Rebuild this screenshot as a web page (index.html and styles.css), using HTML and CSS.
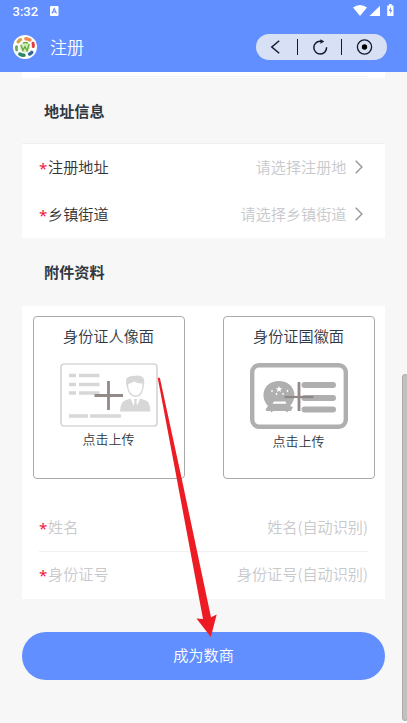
FILE: index.html
```html
<!DOCTYPE html>
<html lang="zh-CN">
<head>
<meta charset="utf-8">
<title>注册</title>
<link rel="stylesheet" href="styles.css">
</head>
<body>
<header class="header">
  <div class="status">
    <span class="time">3:32</span>
    <svg class="ime" width="9" height="10" viewBox="0 0 9 10"><rect width="8.5" height="10" rx="1" fill="#fff"/><path d="M2 7.5 4.2 2.5 6.5 7.5M2.8 6H5.8" fill="none" stroke="#628fff" stroke-width="1.1"/></svg>
    <svg class="signals" width="42" height="13" viewBox="0 0 42 13" fill="#fff"><path d="M0 3.5Q7-1.7 14 3.5L7 12Z"/><path d="M27 1.8V12H16.5Z"/><path d="M34.2 1.5h1.8V0h2.7v1.5H40.5V11.5q0 .5-.5.5h-5.3q-.5 0-.5-.5Z"/><path d="M38 2.8 35.7 6.8H37.2v3.2L39.3 6h-1.5Z" fill="#628fff"/></svg>
  </div>
  <div class="navbar">
    <svg class="logo" width="24" height="24" viewBox="0 0 24 24">
      <circle cx="12" cy="12" r="12" fill="#fff"/>
      <g fill="none" stroke-width="3.4" stroke-linecap="round">
        <path d="M5.2 6.8Q6 5.5 7.5 4.8" stroke="#d4a446"/>
        <path d="M12.8 3.7Q15 3.8 17 5" stroke="#f4894b"/>
        <path d="M20 8.2Q20.6 10 20.2 11.5" stroke="#e5393c" stroke-width="3"/>
        <path d="M18.8 17.3Q17.8 18.5 16.5 19.1" stroke="#356c91"/>
        <path d="M11 20.3Q8.5 20.2 6.8 19" stroke="#2c8660"/>
        <path d="M3.7 15Q3 13.3 3.6 11.7" stroke="#6fa95d" stroke-width="2.9"/>
      </g>
      <circle cx="12" cy="12.3" r="5.3" fill="#d8eec9"/>
      <path d="M7.8 10 10 15.3 12 11.5 14 15.7 16.2 9M10 8.2Q12.5 7 15 8" fill="none" stroke="#65ad39" stroke-width="1.4"/>
    </svg>
    <h1 class="page-title">注册</h1>
    <div class="capsule">
      <svg width="131" height="26" viewBox="0 0 131 26" fill="none" stroke="#111b2c" stroke-width="1.5">
        <path d="M23.2 6.7 15.8 13 23.2 19.3"/>
        <path d="M41.5 5V21M85.5 5V21" stroke-width="1"/>
        <path d="M66.2 7.2H64A6.4 6.4 0 1 0 70.6 13.3"/>
        <path d="M64.4 5.3 68.3 7.6 64.4 9.8Z" fill="#111b2c" stroke="none"/>
        <circle cx="108.5" cy="13" r="7.1" stroke-width="1.3"/><circle cx="108.5" cy="13" r="2.7" fill="#000" stroke="none"/>
      </svg>
    </div>
  </div>
</header>
<main class="content">
  <div class="card previous"><div class="line"></div></div>
  <h2 class="section-title">地址信息</h2>
  <section class="card address">
    <div class="row"><i class="req">*</i><span>注册地址</span><span class="hint">请选择注册地</span><svg class="chevron" width="8" height="14" viewBox="0 0 8 14"><path d="M.7.8 6.9 7 .7 13.2"/></svg></div>
    <div class="row"><i class="req">*</i><span>乡镇街道</span><span class="hint">请选择乡镇街道</span><svg class="chevron" width="8" height="14" viewBox="0 0 8 14"><path d="M.7.8 6.9 7 .7 13.2"/></svg></div>
  </section>
  <h2 class="section-title attachments">附件资料</h2>
  <section class="card files">
    <div class="uploads">
      <div class="upload">
        <div class="upload-title">身份证人像面</div>
        <svg class="front" width="98" height="64" viewBox="0 0 98 64">
          <rect x="1" y="1" width="96" height="62" rx="3" fill="#fff" stroke="#d7d7d7" stroke-width="1.7"/>
          <path d="M9 12.5h7M19 12.5h20.5M9 21.5h7M19 21.5h20.5M9 30h7M19 30h20.5M9 53h19M30 53h31" stroke="#d7d7d7" stroke-width="3.4"/>
          <path d="M66.7 23Q63.5 12.8 73 13 84.5 10.7 84.4 19L83.5 25Q82 34 75.3 34 68.5 34 66.7 23Z" fill="#d7d7d7"/>
          <path d="M68 21Q72 20 74 18.5 78 21 82.6 20.5 82.5 32 75.4 32.6 68.5 32 68 21Z" fill="#fff"/>
          <path d="M60 48.5Q60.5 38.5 66 37L70.5 35.5 75.5 46.5 80.2 35.5 86 37.5Q90 39 90.5 48.5Z" fill="#d7d7d7"/>
          <path d="M74 36h3l-.5 3 1 6-2 3-2-3 1-6Z" fill="#d7d7d7"/>
          <path d="M34.5 32.5h28.5M48.5 18v29" stroke="#938989" stroke-width="2.8"/>
        </svg>
        <div class="upload-action">点击上传</div>
      </div>
      <div class="upload">
        <div class="upload-title">身份证国徽面</div>
        <svg class="back" width="98" height="66" viewBox="0 0 98 66">
          <rect x="2.2" y="2.2" width="93.6" height="61.6" rx="7" fill="#fff" stroke="#afafaf" stroke-width="4.4"/>
          <path d="M54.5 22H83M54.5 35H83M54.5 46.5H83" stroke="#afafaf" stroke-width="6" stroke-linecap="round"/>
          <path d="M18 43C9 33 14 18 29 18S49 34 40 43L43 44 41 48H38L37.5 49.5 35.5 48H23L21.5 49.5 20.5 48H16.5L15.5 46.5Z" fill="#afafaf"/>
          <path d="m29 23 .8 2.1 2.4.1-1.8 1.5.6 2.3-2-1.3-2 1.3.6-2.3-1.8-1.5 2.4-.1ZM21 28l1-1.4L23 28l-1 1.3ZM36.5 28l1-1.4 1 1.4-1 1.3ZM25.5 31l1-1.4 1 1.4-1 1.3ZM32 31l1-1.4 1 1.4-1 1.3ZM24 38.5h11.5l1 2.3H22.5Z" fill="#fff"/>
          <path d="M34.5 34h29" stroke="#8f8787" stroke-width="2.2"/><path d="M49 19v29" stroke="#938989" stroke-width="2.8"/>
        </svg>
        <div class="upload-action">点击上传</div>
      </div>
    </div>
    <div class="identity">
      <div class="row muted"><i class="req">*</i><span>姓名</span><span class="hint">姓名(自动识别)</span></div>
      <div class="row muted"><i class="req">*</i><span>身份证号</span><span class="hint">身份证号(自动识别)</span></div>
    </div>
  </section>
  <button class="submit">成为数商</button>
</main>
<svg class="pointer" width="60" height="262" viewBox="0 0 60 262"><path d="M.8 1.2Q1.8-.5 3 1.5L25 103 54 240.3 59.7 237.5 53.8 260 39.5 241.5 46 242 20 103Z" fill="#ed1c24"/></svg>
<div class="scrollbar"></div>
</body>
</html>
```
FILE: styles.css
```css
* { box-sizing: border-box; }
body { margin: 0; height: 723px; overflow: hidden; position: relative; background: #f7f7f7; color: #333; font: 350 15.15px/22px "Noto Sans CJK SC", sans-serif; }
svg { display: block; flex: none; }
.header { height: 72px; background: #628fff; color: #fff; }
.status { height: 23px; display: flex; align-items: center; padding: 0 12px 0 12.5px; }
.time { width: 37px; font: 500 13px/22px Roboto, sans-serif; }
.ime { margin-top: -2px; }
.signals { margin-left: auto; margin-top: -2px; }
.navbar { height: 48px; display: flex; align-items: center; padding: 0 20px 0 13px; }
.page-title { margin: 0 0 0 13px; font-size: 17px; font-weight: 350; }
.capsule { margin-left: auto; width: 131px; height: 26px; border-radius: 13px; background: #d8e0f5; }
.content { padding: 0 22px; }
.card { background: #fff; }
.previous { height: 6px; padding: 4px 17px 0; }
.line { height: 1px; background: #f5f5f5; }
.section-title { height: 65px; margin: 0; padding-left: 22px; font-size: 15.15px; line-height: 65px; font-weight: 700; color: #303841; }
.address { height: 95px; border-top: 1px solid #f0f0f0; }
.row { height: 47.3px; display: flex; align-items: center; padding: 0 17px; }
.row span { padding-bottom: 3px; }
.req { width: 9px; padding-top: 1px; color: #ee1535; font: 400 15px/22px "Noto Sans", sans-serif; }
.hint { margin-left: auto; color: #c8c9cc; }
.address .row { padding-right: 22px; }
.chevron { margin-left: 8.5px; margin-top: -1px; fill: none; stroke: #969799; stroke-width: 1.4; }
.attachments { height: 68px; line-height: 67px; }
.files { height: 293px; padding: 10px 10.5px 0; }
.uploads { display: flex; justify-content: space-between; }
.upload { width: 152px; height: 163px; border: 1px solid #aaa; border-radius: 4px; display: flex; flex-direction: column; align-items: center; color: #303841; padding-top: 7px; }
.upload-title { height: 22px; }
.front { margin-top: 17px; }
.back { margin-top: 17px; }
.upload-action { font-size: 13px; line-height: 24px; }
.identity { margin: 24.5px 6.5px 0; }
.muted { padding: 0; color: #c8c9cc; }
.muted + .muted { border-top: 1px solid #f1f1f1; }
.submit { display: block; width: 363px; height: 48px; margin-top: 33px; padding: 0 0 5px; border: 0; border-radius: 24px; background: #628fff; color: #fff; font: inherit; }
.pointer { position: absolute; left: 157px; top: 377px; }
.scrollbar { position: absolute; left: 402px; top: 374px; width: 6px; height: 347px; border: 1px solid #aaa; border-radius: 3px; background: #c1c1c1; }
```
